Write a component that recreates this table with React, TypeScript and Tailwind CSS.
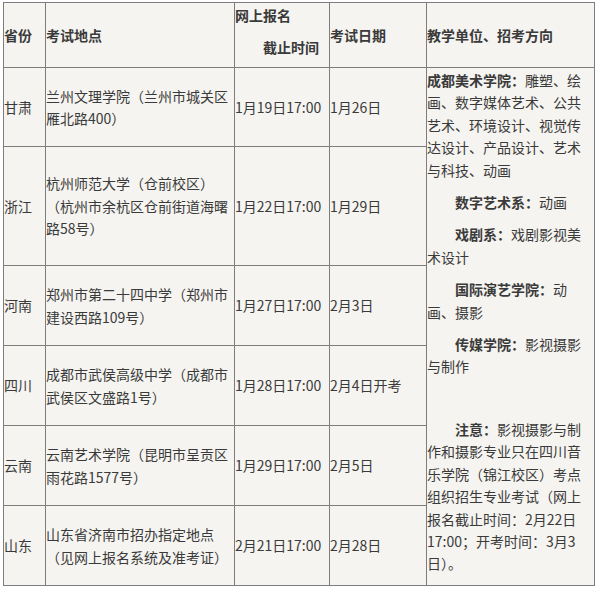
import React from 'react';

interface Row {
  province: string;
  place: string[];
  deadline: string;
  examDate: string;
  height: string;
}

const rows: Row[] = [
  { province: '甘肃', place: ['兰州文理学院（兰州市城关区', '雁北路400）'], deadline: '1月19日17:00', examDate: '1月26日', height: 'h-[79px]' },
  { province: '浙江', place: ['杭州师范大学（仓前校区）', '（杭州市余杭区仓前街道海曙', '路58号）'], deadline: '1月22日17:00', examDate: '1月29日', height: 'h-[119px]' },
  { province: '河南', place: ['郑州市第二十四中学（郑州市', '建设西路109号）'], deadline: '1月27日17:00', examDate: '2月3日', height: 'h-[80px]' },
  { province: '四川', place: ['成都市武侯高级中学（成都市', '武侯区文盛路1号）'], deadline: '1月28日17:00', examDate: '2月4日开考', height: 'h-[80px]' },
  { province: '云南', place: ['云南艺术学院（昆明市呈贡区', '雨花路1577号）'], deadline: '1月29日17:00', examDate: '2月5日', height: 'h-[80px]' },
  { province: '山东', place: ['山东省济南市招办指定地点', '（见网上报名系统及准考证）'], deadline: '2月21日17:00', examDate: '2月28日', height: 'h-[80px]' },
];

const cell = 'border border-[#7d7d7d] px-0 py-0 align-middle';

const Lines = ({ lines }: { lines: string[] }) => (
  <>
    {lines.map((l, i) => (
      <span key={i} className="block whitespace-nowrap">{l}</span>
    ))}
  </>
);

const Units = () => (
  <div className="flex flex-col gap-[10px] pt-[1px] whitespace-nowrap">
    <div>
      <b>成都美术学院：</b>雕塑、绘<br />
      画、数字媒体艺术、公共<br />
      艺术、环境设计、视觉传<br />
      达设计、产品设计、艺术<br />
      与科技、动画
    </div>
    <div className="indent-[28px]">
      <b>数字艺术系：</b>动画
    </div>
    <div className="indent-[28px]">
      <b>戏剧系：</b>戏剧影视美<br />
      术设计
    </div>
    <div className="indent-[28px]">
      <b>国际演艺学院：</b>动<br />
      画、摄影
    </div>
    <div className="indent-[28px]">
      <b>传媒学院：</b>影视摄影<br />
      与制作
    </div>
    <div className="h-[20px]" />
    <div className="indent-[28px]">
      <b>注意：</b>影视摄影与制<br />
      作和摄影专业只在四川音<br />
      乐学院（锦江校区）考点<br />
      组织招生专业考试（网上<br />
      报名截止时间：2月22日<br />
      17:00；开考时间：3月3<br />
      日）。
    </div>
  </div>
);

export default function App() {
  return (
    <div
      className="w-[596px] h-[590px] bg-white pl-[3px] pt-[2px] text-[14px] leading-[22.4px] text-[#3a3a3a]"
      style={{ fontFamily: '"Noto Sans CJK SC", "Microsoft YaHei", sans-serif' }}
    >
      <table className="table-fixed border-collapse bg-[#f5f4f0] w-[591px]">
        <colgroup>
          <col className="w-[42px]" />
          <col className="w-[189px]" />
          <col className="w-[95px]" />
          <col className="w-[97px]" />
          <col className="w-[168px]" />
        </colgroup>
        <tbody>
          <tr className="h-[65px] font-bold">
            <td className={cell}>省份</td>
            <td className={cell}>考试地点</td>
            <td className={`${cell} !align-top`}>
              <div className="pt-[1px]">网上报名</div>
              <div className="mt-[10px] indent-[28px]">截止时间</div>
            </td>
            <td className={cell}>考试日期</td>
            <td className={cell}>教学单位、招考方向</td>
          </tr>
          {rows.map((r, i) => (
            <tr key={r.province} className={r.height}>
              <td className={cell}>{r.province}</td>
              <td className={cell}>
                <Lines lines={r.place} />
              </td>
              <td className={`${cell} whitespace-nowrap`}>{r.deadline}</td>
              <td className={`${cell} whitespace-nowrap`}>{r.examDate}</td>
              {i === 0 && (
                <td rowSpan={6} className={`${cell} !align-top`}>
                  <Units />
                </td>
              )}
            </tr>
          ))}
        </tbody>
      </table>
    </div>
  );
}
